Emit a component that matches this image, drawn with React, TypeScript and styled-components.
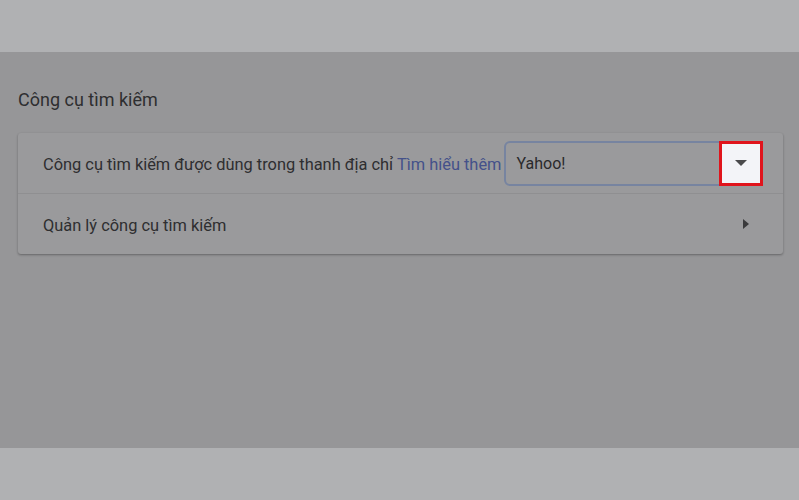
import React from 'react';
import styled, { createGlobalStyle } from 'styled-components';

const GlobalStyle = createGlobalStyle`
  html, body {
    margin: 0;
    padding: 0;
    background: #b0b1b3;
    font-family: Roboto, "Noto Sans", "Liberation Sans", sans-serif;
  }
`;

const App: React.FC = () => {
  return (
    <Page>
      <GlobalStyle />
      <TopBand />
      <Main>
        <Title>Công cụ tìm kiếm</Title>
        <Card>
          <Row>
            <Label>
              Công cụ tìm kiếm được dùng trong thanh địa chỉ{' '}
              <Link>Tìm hiểu thêm</Link>
            </Label>
            <Select>
              <SelectValue>Yahoo!</SelectValue>
              <ArrowBox>
                <svg width="12" height="6" viewBox="0 0 12 6">
                  <path d="M0 0 L12 0 L6 6 Z" fill="#4a4a4c" />
                </svg>
              </ArrowBox>
            </Select>
          </Row>
          <Row>
            <Label>Quản lý công cụ tìm kiếm</Label>
            <Chevron>
              <svg width="6" height="10" viewBox="0 0 6 10">
                <path d="M0 0 L6 5 L0 10 Z" fill="#3a3a3c" />
              </svg>
            </Chevron>
          </Row>
        </Card>
      </Main>
      <BottomBand />
    </Page>
  );
};

const Page = styled.div`
  width: 799px;
  height: 500px;
  display: flex;
  flex-direction: column;
  overflow: hidden;
`;

const TopBand = styled.div`
  height: 52px;
  background: #b0b1b3;
`;

const BottomBand = styled.div`
  height: 52px;
  background: #b0b1b3;
`;

const Main = styled.div`
  flex: 1;
  background: #969698;
  padding: 36px 16px 0 18px;
`;

const Title = styled.div`
  font-size: 18px;
  color: #2e2e30;
  line-height: 24px;
  margin-bottom: 21px;
`;

const Card = styled.div`
  background: #9a9a9c;
  border-radius: 3px;
  box-shadow: 0 1px 2px rgba(0, 0, 0, 0.22), 0 1px 3px rgba(0, 0, 0, 0.12);
`;

const Row = styled.div`
  height: 60px;
  display: flex;
  align-items: center;
  justify-content: space-between;
  gap: 3px;
  padding: 0 22px 0 25px;
  & + & {
    border-top: 1px solid #8f8f91;
  }
`;

const Label = styled.div`
  font-size: 16.4px;
  color: #2e2e30;
  white-space: nowrap;
  padding-top: 2px;
`;

const Link = styled.span`
  color: #44518a;
`;

const Select = styled.div`
  width: 259px;
  height: 45px;
  box-sizing: border-box;
  border: 2px solid #7784a0;
  border-radius: 6px;
  display: flex;
  align-items: center;
  justify-content: space-between;
  margin-right: -1px;
`;

const SelectValue = styled.span`
  font-size: 16px;
  color: #2a2a2c;
  padding-left: 10px;
`;

const ArrowBox = styled.div`
  width: 44px;
  height: 45px;
  box-sizing: border-box;
  border: 3px solid #e0141c;
  background: #f3f4f8;
  display: flex;
  align-items: center;
  justify-content: center;
  margin-right: -3px;
`;

const Chevron = styled.div`
  display: flex;
  align-items: center;
  padding-right: 12px;
`;

export default App;
